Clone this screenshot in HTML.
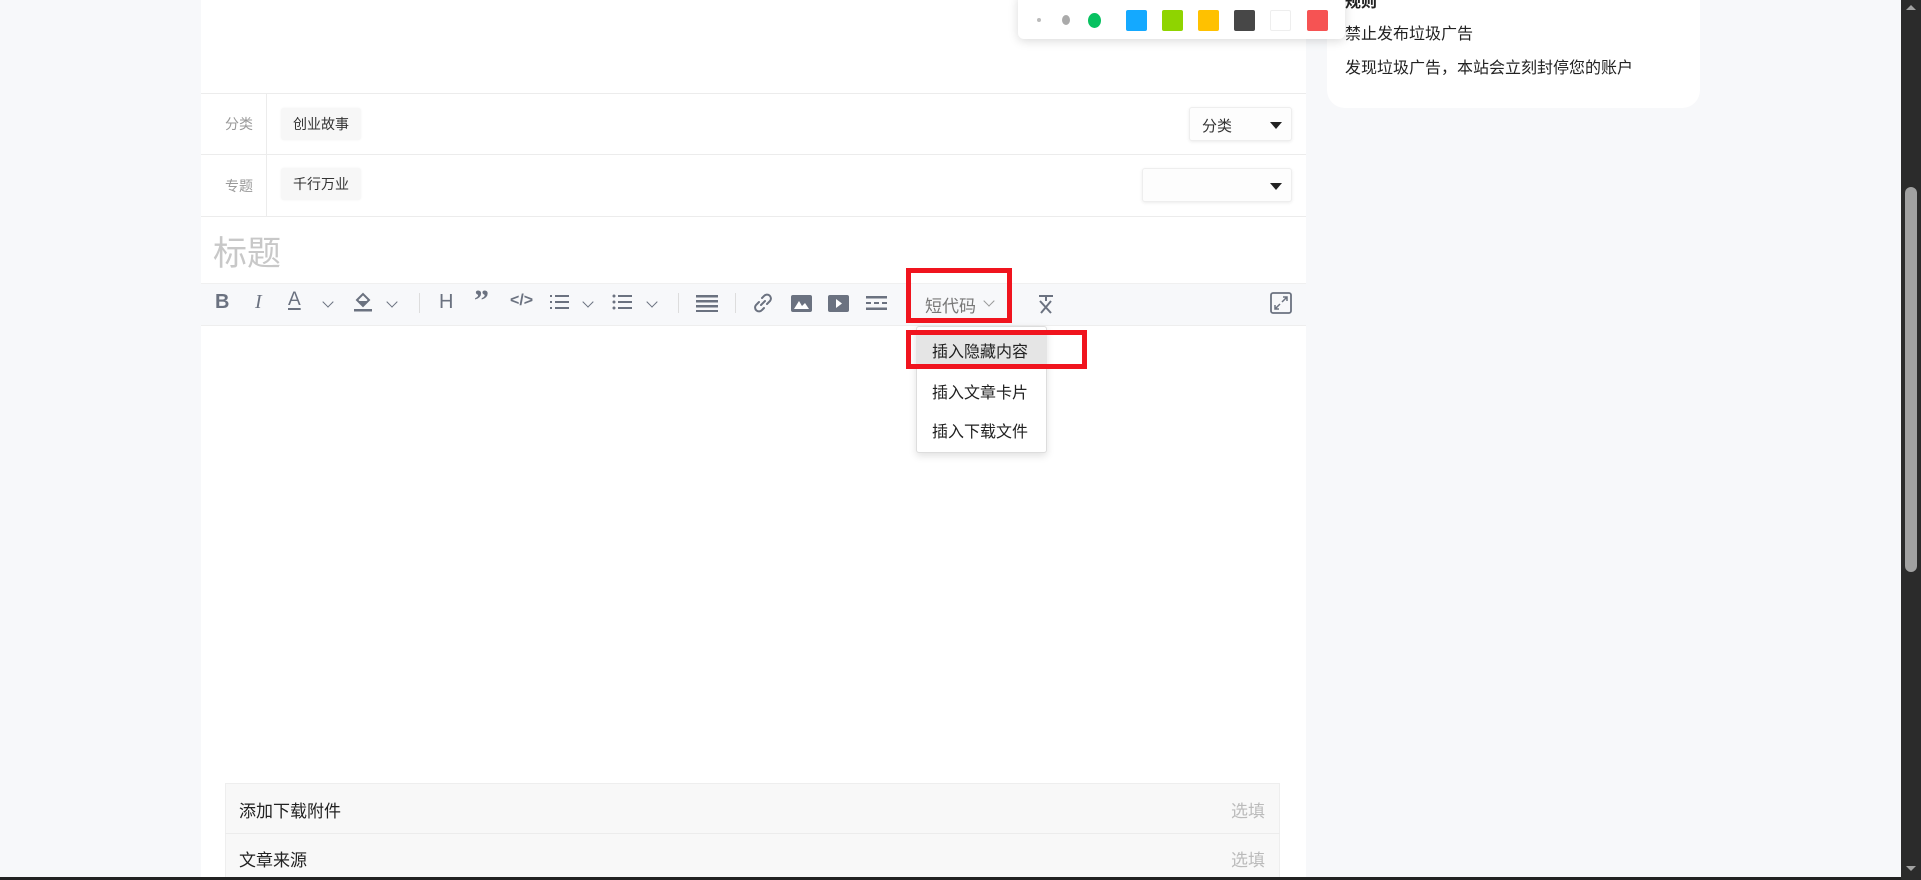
<!DOCTYPE html>
<html><head><meta charset="utf-8"><style>
*{margin:0;padding:0;box-sizing:border-box}
body{width:1921px;height:880px;background:#f7f8fa;position:relative;overflow:hidden;font-family:"Liberation Sans","Noto Sans CJK SC",sans-serif;color:#333}
.a{position:absolute}
.panel{left:201px;top:0;width:1105px;height:880px;background:#fff}
.line{height:1px;background:#ececec;left:201px;width:1105px}
.lbl{font-size:14px;color:#999}
.tag{background:#f7f7f7;border-radius:3px;font-size:14px;color:#333;padding:0 12px;line-height:32px;height:32px;box-shadow:0 0 2px rgba(0,0,0,.05)}
.sel{background:#fdfdfd;border:1px solid #eee;border-radius:3px;box-shadow:0 1px 3px rgba(0,0,0,.08)}
.tri{width:0;height:0;border-left:6px solid transparent;border-right:6px solid transparent;border-top:7px solid #222}
.ic{position:absolute;top:292px;color:#6b7280}
.chev{position:absolute;top:298px;width:8px;height:8px;border-right:1.6px solid #6b7280;border-bottom:1.6px solid #6b7280;transform:rotate(45deg)}
.sw{position:absolute;top:10px;width:21px;height:21px;border-radius:2px}
.red{border:5px solid #f0141e}
</style></head><body>
<div class="a panel"></div>
<!-- right card -->
<div class="a" style="left:1327px;top:-20px;width:373px;height:128px;background:#fff;border-radius:18px"></div>
<div class="a" style="left:1345px;top:-12px;font-size:16px;font-weight:bold;color:#222">规则</div>
<div class="a" style="left:1345px;top:20px;font-size:16px;color:#222">禁止发布垃圾广告</div>
<div class="a" style="left:1345px;top:54px;font-size:16px;color:#222">发现垃圾广告，本站会立刻封停您的账户</div>
<!-- color popup -->
<div class="a" style="left:1018px;top:-6px;width:327px;height:45px;background:#fff;border-radius:6px;box-shadow:0 2px 10px rgba(0,0,0,.15)"></div>
<div class="a" style="left:1037px;top:18px;width:4px;height:4px;border-radius:50%;background:#bbb"></div>
<div class="a" style="left:1062px;top:15px;width:8px;height:10px;border-radius:50%;background:#aaa"></div>
<div class="a" style="left:1088px;top:13px;width:13px;height:15px;border-radius:50%;background:#07c160"></div>
<div class="sw" style="left:1126px;background:#14a9ff"></div>
<div class="sw" style="left:1162px;background:#8fd400"></div>
<div class="sw" style="left:1198px;background:#ffc100"></div>
<div class="sw" style="left:1234px;background:#474747"></div>
<div class="sw" style="left:1270px;background:#fff;border:1px solid #eee"></div>
<div class="sw" style="left:1307px;background:#f65353"></div>
<!-- rows -->
<div class="a line" style="top:93px"></div>
<div class="a line" style="top:154px"></div>
<div class="a line" style="top:216px"></div>
<div class="a" style="left:266px;top:93px;width:1px;height:123px;background:#ececec"></div>
<div class="a lbl" style="left:225px;top:114px">分类</div>
<div class="a lbl" style="left:225px;top:176px">专题</div>
<div class="a tag" style="left:281px;top:108px">创业故事</div>
<div class="a tag" style="left:281px;top:168px">千行万业</div>
<div class="a sel" style="left:1189px;top:107px;width:103px;height:34px"><span class="a" style="left:12px;top:7px;font-size:15px;color:#333">分类</span><div class="a tri" style="right:9px;top:14px"></div></div>
<div class="a sel" style="left:1142px;top:168px;width:150px;height:34px"><div class="a tri" style="right:9px;top:14px"></div></div>
<div class="a" style="left:213px;top:226px;font-size:34px;color:#c8c8c8">标题</div>
<!-- toolbar -->
<div class="a" style="left:201px;top:283px;width:1105px;height:43px;background:#f7f8fa;border-bottom:1px solid #eee;border-top:1px solid #f0f0f0"></div>
<div class="ic" style="left:215px;top:291px;font-size:20px;font-weight:bold">B</div>
<div class="ic" style="left:255px;top:291px;font-size:20px;font-style:italic;font-family:'Liberation Serif',serif">I</div>
<div class="ic" style="left:288px;top:289px;font-size:19px;text-decoration:underline;text-underline-offset:3px;text-decoration-thickness:2px">A</div>
<div class="chev" style="left:324px"></div>
<svg class="a" style="left:353px;top:291px" width="20" height="22" viewBox="0 0 20 22"><path d="M4 9 L10 3 L16 9 L10 15 Z" fill="none" stroke="#6b7280" stroke-width="2"/><path d="M6 10 H14 L10 14 Z" fill="#6b7280"/><rect x="1" y="18" width="18" height="2.5" fill="#6b7280"/></svg>
<div class="chev" style="left:388px"></div>
<div class="a" style="left:419px;top:293px;width:1px;height:20px;background:#ddd"></div>
<div class="ic" style="left:439px;top:291px;font-size:20px">H</div>
<div class="ic" style="left:474px;top:284px;font-size:30px;font-weight:bold;font-family:'Liberation Serif',serif">”</div>
<div class="ic" style="left:510px;top:292px;font-size:16px;font-weight:bold">&lt;/&gt;</div>
<svg class="a" style="left:549px;top:294px" width="20" height="16"><g fill="#6b7280"><rect x="6" y="1" width="14" height="2"/><rect x="6" y="7" width="14" height="2"/><rect x="6" y="13" width="14" height="2"/><rect x="1" y="1" width="2" height="2"/><rect x="1" y="7" width="2" height="2"/><rect x="1" y="13" width="2" height="2"/></g></svg>
<div class="chev" style="left:584px"></div>
<svg class="a" style="left:612px;top:294px" width="20" height="16"><g fill="#6b7280"><rect x="6" y="1" width="14" height="2"/><rect x="6" y="7" width="14" height="2"/><rect x="6" y="13" width="14" height="2"/><circle cx="2" cy="2" r="1.5"/><circle cx="2" cy="8" r="1.5"/><circle cx="2" cy="14" r="1.5"/></g></svg>
<div class="chev" style="left:648px"></div>
<div class="a" style="left:678px;top:293px;width:1px;height:20px;background:#ddd"></div>
<svg class="a" style="left:696px;top:294px" width="22" height="18"><g fill="#6b7280"><rect y="1" width="22" height="2.5"/><rect y="6" width="22" height="2.5"/><rect y="11" width="22" height="2.5"/><rect y="16" width="22" height="2"/></g></svg>
<div class="a" style="left:735px;top:293px;width:1px;height:20px;background:#ddd"></div>
<svg class="a" style="left:753px;top:293px" width="20" height="20" viewBox="0 0 20 20"><path d="M8 12 L12 8 M9 5 L11 3 A3.5 3.5 0 0 1 17 8 L14 11 M11 15 L9 17 A3.5 3.5 0 0 1 3 12 L6 9" fill="none" stroke="#6b7280" stroke-width="2" stroke-linecap="round"/></svg>
<svg class="a" style="left:791px;top:295px" width="21" height="17"><rect width="21" height="17" rx="2" fill="#6b7280"/><path d="M3 14 L8 6 L11 11 L14 8 L18 14Z" fill="#fff"/></svg>
<svg class="a" style="left:828px;top:295px" width="21" height="17"><rect width="21" height="17" rx="2" fill="#6b7280"/><path d="M8 4 L14 8.5 L8 13Z" fill="#fff"/></svg>
<svg class="a" style="left:866px;top:295px" width="21" height="16"><g fill="#6b7280"><rect y="1" width="21" height="2.5"/><rect y="7" width="5" height="2"/><rect x="8" y="7" width="5" height="2"/><rect x="16" y="7" width="5" height="2"/><rect y="12.5" width="21" height="2.5"/></g></svg>
<div class="a" style="left:925px;top:292px;font-size:17px;color:#777">短代码</div>
<div class="chev" style="left:985px;top:297px;border-color:#999"></div>
<svg class="a" style="left:1036px;top:293px" width="20" height="22" viewBox="0 0 20 22"><path d="M3 3 H17 M10 3 V8 M4 8 L15 20 M15 8 L5 20" fill="none" stroke="#6b7280" stroke-width="2"/></svg>
<svg class="a" style="left:1270px;top:292px" width="22" height="22"><rect x="1" y="1" width="20" height="20" rx="2" fill="none" stroke="#6b7280" stroke-width="1.8"/><path d="M12 10 L17 5 M13 5 H17 V9 M10 12 L5 17 M5 13 V17 H9" fill="none" stroke="#6b7280" stroke-width="1.5"/></svg>
<!-- dropdown -->
<div class="a" style="left:916px;top:326px;width:131px;height:127px;background:#fff;border:1px solid #ddd;border-radius:3px;box-shadow:0 3px 8px rgba(0,0,0,.12)"></div>
<div class="a" style="left:916px;top:331px;width:131px;height:37px;background:#e5e5e5"></div>
<div class="a" style="left:932px;top:338px;font-size:16px;color:#222">插入隐藏内容</div>
<div class="a" style="left:932px;top:379px;font-size:16px;color:#222">插入文章卡片</div>
<div class="a" style="left:932px;top:418px;font-size:16px;color:#222">插入下载文件</div>
<div class="a red" style="left:906px;top:268px;width:106px;height:55px"></div>
<div class="a red" style="left:906px;top:330px;width:181px;height:39px"></div>
<!-- bottom -->
<div class="a" style="left:225px;top:783px;width:1055px;height:97px;background:#f8f8f8;border:1px solid #eee"></div>
<div class="a" style="left:225px;top:833px;width:1055px;height:1px;background:#ececec"></div>
<div class="a" style="left:239px;top:797px;font-size:17px;color:#222">添加下载附件</div>
<div class="a" style="left:239px;top:846px;font-size:17px;color:#222">文章来源</div>
<div class="a" style="left:1231px;top:797px;font-size:17px;color:#bbb">选填</div>
<div class="a" style="left:1231px;top:846px;font-size:17px;color:#bbb">选填</div>
<div class="a" style="left:0;top:877px;width:1921px;height:3px;background:#222"></div>
<!-- scrollbar -->
<div class="a" style="left:1901px;top:0;width:20px;height:880px;background:#2b2b2b"></div>
<div class="a" style="left:1905px;top:187px;width:12px;height:385px;border-radius:6px;background:#a1a1a1"></div>
<div class="a" style="left:1906px;top:5px;border-left:5px solid transparent;border-right:5px solid transparent;border-bottom:5px solid #a1a1a1"></div>
<div class="a" style="left:1906px;top:866px;border-left:5px solid transparent;border-right:5px solid transparent;border-top:5px solid #a1a1a1"></div>
</body></html>
